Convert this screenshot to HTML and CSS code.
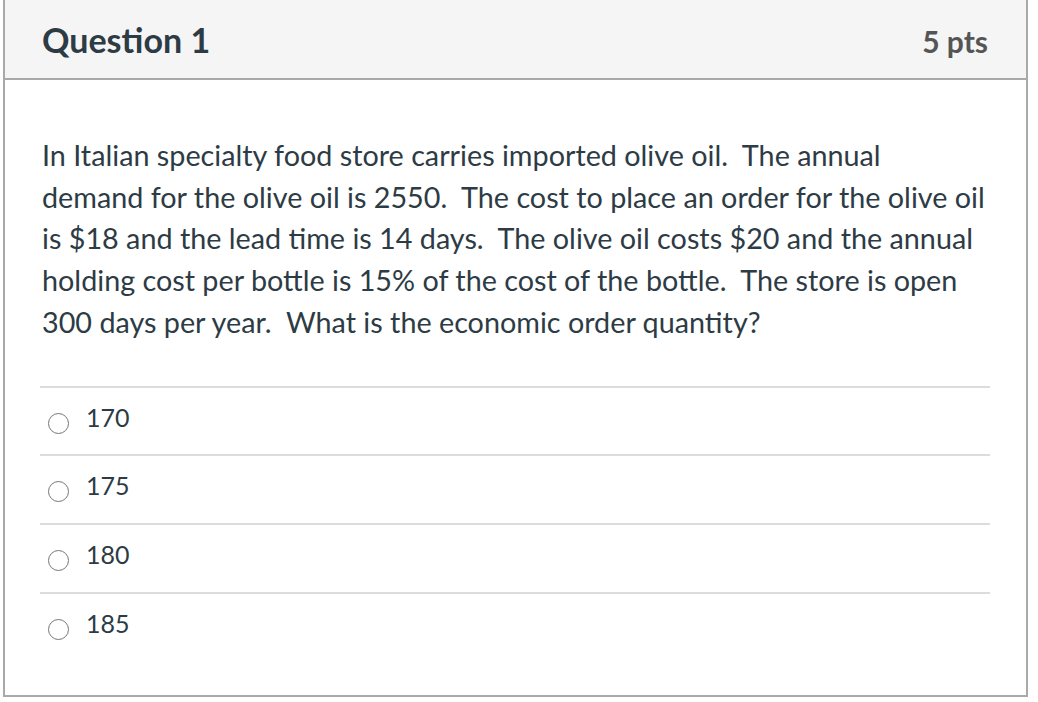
FILE: index.html
```html
<!DOCTYPE html>
<html>
<head>
<meta charset="utf-8">
<link rel="stylesheet" href="styles.css">
</head>
<body>
<div class="question">
  <div class="header">
    <span class="title">Question 1</span>
    <span class="pts">5 pts</span>
  </div>
  <div class="content">
    <p class="text">In Italian specialty food store carries imported olive oil.&nbsp; The annual<br>demand for the olive oil is 2550.&nbsp; The cost to place an order for the olive oil<br>is $18 and the lead time is 14 days.&nbsp; The olive oil costs $20 and the annual<br>holding cost per bottle is 15% of the cost of the bottle.&nbsp; The store is open<br>300 days per year.&nbsp; What is the economic order quantity?</p>
    <div class="answers">
      <div class="answer"><span class="radio"></span><span class="label">170</span></div>
      <div class="answer"><span class="radio"></span><span class="label">175</span></div>
      <div class="answer"><span class="radio"></span><span class="label">180</span></div>
      <div class="answer"><span class="radio"></span><span class="label">185</span></div>
    </div>
  </div>
</div>
</body>
</html>
```
FILE: styles.css
```css
html, body {
  margin: 0;
  padding: 0;
  background: #fff;
}
body {
  font-family: Lato, "Noto Sans", sans-serif;
  color: #2d3b45;
}
.question {
  margin-left: 3px;
  width: 1021px;
  height: 695px;
  border: 2px solid #a9a9a9;
  border-top: none;
  box-sizing: content-box;
}
.header {
  box-sizing: border-box;
  height: 80px;
  background: #f5f5f5;
  border-bottom: 2px solid #a9a9a9;
  display: flex;
  align-items: baseline;
  justify-content: space-between;
  padding: 20px 38px 0 37px;
}
.title {
  font-size: 34px;
  line-height: 40.8px;
  font-weight: 700;
  color: #2d3b45;
}
.pts {
  font-size: 30px;
  font-weight: 700;
  color: #555;
}
.content {
  padding: 55px 36px 0 35px;
}
.text {
  margin: 0 0 0 2px;
  font-size: 28.75px;
  line-height: 41.7px;
  white-space: nowrap;
}
.answers {
  margin-top: 42px;
}
.answer {
  box-sizing: border-box;
  display: flex;
  align-items: flex-start;
  height: 68.9px;
  padding-top: 14px;
  border-top: 2px solid #dcdcdc;
}
.radio {
  box-sizing: border-box;
  width: 21px;
  height: 21px;
  border: 1.5px solid #767676;
  border-radius: 50%;
  margin: 11px 17px 0 8px;
}
.label {
  font-size: 25px;
  line-height: 30px;
}
```
